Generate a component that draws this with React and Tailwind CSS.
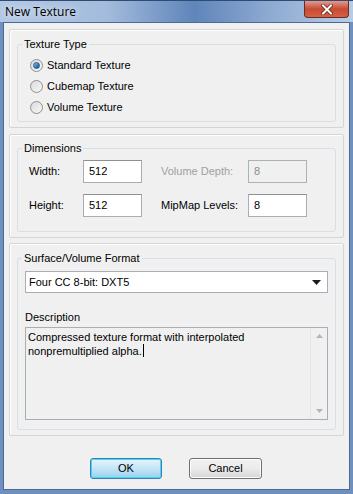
import React from "react";

const Radio = ({ checked, label }) => (
  <div className="flex items-center h-[21px]">
    <span className="w-[13px] h-[13px] rounded-full border border-[#8f8f8f] bg-gradient-to-br from-[#dcdcdc] to-[#f7f7f7] flex items-center justify-center">
      {checked && (
        <span className="w-[7px] h-[7px] rounded-full bg-gradient-to-br from-[#7cc4f0] to-[#0a4c86] border border-[#1d5c95]" />
      )}
    </span>
    <span className="ml-[4px]">{label}</span>
  </div>
);

const Panel = ({ className, legend, children }) => (
  <div className={`border border-[#d5d5d5] shadow-[inset_1px_1px_0_#fff] rounded-[2px] px-[7px] ${className}`}>
    <fieldset className="border border-[#d5dfe5] rounded-[3px] px-[7px] h-full">
      <legend className="px-[2px] ml-[-3px] leading-[13px]">{legend}</legend>
      {children}
    </fieldset>
  </div>
);

const Field = ({ value, disabled }) => (
  <div
    className={`w-[59px] h-[23px] border ${
      disabled
        ? "border-[#adb2b5] bg-[#f0f0f0] text-[#8d8d8d]"
        : "border-[#abadb3] border-t-[#8e8f8f] bg-white"
    } px-[5px] leading-[21px]`}
  >
    {value}
  </div>
);

export default function App() {
  return (
    <div
      className="w-[353px] h-[494px] flex flex-col bg-[#6f90be] text-[11px] text-black"
      style={{ fontFamily: '"Liberation Sans", Arial, sans-serif' }}
    >
      {/* title bar */}
      <div className="h-[22px] flex items-start justify-between bg-[linear-gradient(90deg,#b4c9e4_0%,#a3bcdc_30%,#5f85ba_55%,#8aa8d0_75%,#b9cce4_100%)] border-t border-[#2f4a73]">
        <span
          className="ml-[5px] mt-[2px] text-[12px] text-black [text-shadow:0_0_6px_#fff]"
          style={{ fontFamily: '"Open Sans", "Noto Sans", sans-serif' }}
        >
          New Texture
        </span>
        <div className="mr-[4px] w-[45px] h-[17px] rounded-b-[4px] border border-[#6b2a25] border-t-0 bg-gradient-to-b from-[#e49a8b] via-[#c64a35] to-[#d4613f] flex items-center justify-center">
          <svg width="12" height="11" viewBox="0 0 12 11">
            <path d="M2 1.5 L10 9.5 M10 1.5 L2 9.5" stroke="#5a1a12" strokeWidth="3.4" strokeLinecap="square" />
            <path d="M2 1.5 L10 9.5 M10 1.5 L2 9.5" stroke="#fff" strokeWidth="2" strokeLinecap="square" />
          </svg>
        </div>
      </div>

      {/* client */}
      <div className="flex-1 mx-[3px] mb-[4px] border border-[#4d6a94] bg-[#f0f0f0] px-[5px] pt-[6px] flex flex-col">
        <Panel legend="Texture Type" className="h-[99px] pt-[8px] pb-[5px]">
          <div className="pl-[5px] pt-[4px]">
            <Radio checked label="Standard Texture" />
            <Radio label="Cubemap Texture" />
            <Radio label="Volume Texture" />
          </div>
        </Panel>

        <Panel legend="Dimensions" className="h-[104px] mt-[6px] pt-[7px] pb-[5px]">
          <div className="grid grid-cols-[54px_59px_19px_87px_59px] items-center gap-y-[11px] pt-[5px] pl-[4px]">
            <span>Width:</span>
            <Field value="512" />
            <span />
            <span className="text-[#a0a0a0]">Volume Depth:</span>
            <Field value="8" disabled />
            <span>Height:</span>
            <Field value="512" />
            <span />
            <span>MipMap Levels:</span>
            <Field value="8" />
          </div>
        </Panel>

        <Panel legend="Surface/Volume Format" className="h-[193px] mt-[5px] pt-[8px] pb-[5px]">
          <div className="pt-[6px]">
            <div className="h-[22px] border border-[#abadb3] bg-white flex items-center justify-between pl-[3px] pr-[6px]">
              <span>Four CC 8-bit: DXT5</span>
              <svg width="9" height="5" viewBox="0 0 9 5">
                <path d="M0 0 H9 L4.5 5 Z" fill="#1b1b1b" />
              </svg>
            </div>
            <div className="mt-[16px] mb-[1px]">Description</div>
            <div className="h-[93px] border border-[#abadb3] bg-[#f0f0f0] flex">
              <div className="flex-1 pl-[2px] pt-[2px] leading-[14px]">
                Compressed texture format with interpolated
                <br />
                nonpremultiplied alpha.
                <span className="inline-block w-[1px] h-[13px] bg-black align-[-2px] ml-[1px]" />
              </div>
              <div className="w-[17px] border-l border-[#e6e6e6] flex flex-col items-center justify-between py-[6px]">
                <svg width="7" height="4" viewBox="0 0 7 4">
                  <path d="M0 4 L3.5 0 L7 4 Z" fill="#b5b5b5" />
                </svg>
                <svg width="7" height="4" viewBox="0 0 7 4">
                  <path d="M0 0 H7 L3.5 4 Z" fill="#b5b5b5" />
                </svg>
              </div>
            </div>
          </div>
        </Panel>

        <div className="flex justify-center gap-[27px] mt-[22px] ml-[-1px]">
          <div className="w-[72px] h-[21px] rounded-[3px] border border-[#3c7fb1] shadow-[inset_0_0_0_1px_#48d4f7] bg-gradient-to-b from-[#e5f4fc] via-[#c4e5f6] to-[#98d1ef] flex items-center justify-center">
            OK
          </div>
          <div className="w-[73px] h-[21px] rounded-[3px] border border-[#707070] shadow-[inset_0_0_0_1px_#fcfcfc] bg-gradient-to-b from-[#f2f2f2] via-[#ebebeb] to-[#d5d5d5] flex items-center justify-center">
            Cancel
          </div>
        </div>
      </div>
    </div>
  );
}
